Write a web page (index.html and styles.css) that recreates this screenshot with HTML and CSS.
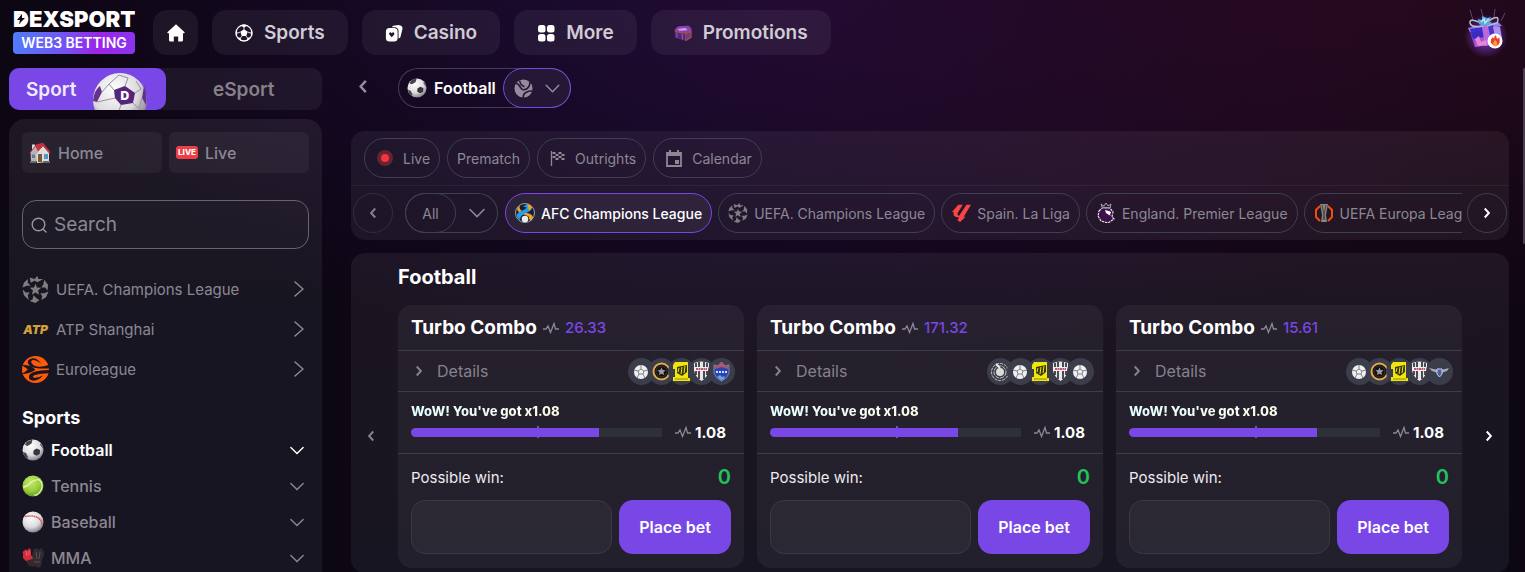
FILE: index.html
```
<!DOCTYPE html>
<html lang="en">

<head>
    <meta charset="UTF-8">
    <meta name="viewport" content="width=device-width, initial-scale=1.0">
    <title>Dexsport</title>
    <link rel="stylesheet" href="styles.css">
</head>

<body>
    <!-- icon sprite -->
    <svg class="sprite" width="0" height="0" aria-hidden="true">
        <defs>
            <radialGradient id="gBall" cx="40%" cy="30%" r="75%">
                <stop offset="0" stop-color="#fff" />
                <stop offset="0.6" stop-color="#dcdade" />
                <stop offset="1" stop-color="#77747c" />
            </radialGradient>
            <radialGradient id="gTennis" cx="40%" cy="30%" r="75%">
                <stop offset="0" stop-color="#c6ea6c" />
                <stop offset="0.6" stop-color="#98cc3c" />
                <stop offset="1" stop-color="#5d8e20" />
            </radialGradient>
            <linearGradient id="gGift" x1="0" y1="0" x2="1" y2="1">
                <stop offset="0" stop-color="#3b2fc4" />
                <stop offset="0.5" stop-color="#a04fd8" />
                <stop offset="1" stop-color="#f0b0ee" />
            </linearGradient>
            <radialGradient id="gGlow">
                <stop offset="0.3" stop-color="#8a3fe0" stop-opacity="0.7" />
                <stop offset="1" stop-color="#8a3fe0" stop-opacity="0" />
            </radialGradient>
        </defs>
        <symbol id="left" viewBox="0 0 10 16">
            <path d="M8 2 2.500 8 8 14" fill="none" stroke="currentColor" stroke-width="2.600" />
        </symbol>
        <symbol id="right" viewBox="0 0 10 16">
            <path d="M2 2 7.500 8 2 14" fill="none" stroke="currentColor" stroke-width="2.600" />
        </symbol>
        <symbol id="thin-right" viewBox="0 0 10 16">
            <path d="M1 1 9 8 1 15" fill="none" stroke="currentColor" stroke-width="1.500" stroke-linecap="round" />
        </symbol>
        <symbol id="down" viewBox="0 0 16 10">
            <path d="M1 1.500 8 8.500 15 1.500" fill="none" stroke="currentColor" stroke-width="1.600" stroke-linecap="round" />
        </symbol>
        <symbol id="house" viewBox="0 0 18 18">
            <path d="M9 .3 17.600 8.200Q18 9.300 17 9.300H16V16Q16 17.600 14.500 17.600H11.200V12.500H6.800V17.600H3.500Q2 17.600 2 16V9.300H1Q0 9.300 .4 8.200Z" fill="#fff" />
        </symbol>
        <symbol id="ball-line" viewBox="0 0 18 18">
            <circle cx="9" cy="9" r="8" fill="none" stroke="#fff" stroke-width="1.300" />
            <path d="M9 5.200 12.600 7.800 11.300 12H6.700L5.400 7.800ZM5.500 1.500 9 3.400 12.500 1.500 10.500.7H7.500ZM17 6 15.200 9 17.300 11.500ZM1 6 2.800 9 .7 11.500ZM11.600 17 12.400 13.800 15.800 13.300ZM6.400 17 5.600 13.800 2.200 13.300Z" fill="#fff" />
            <path d="M9 3V5.500M12.500 8 15.300 9M11 12 12.500 14M7 12 5.500 14M5.500 8 2.700 9" stroke="#fff" stroke-width=".8" />
        </symbol>
        <symbol id="cards" viewBox="0 0 20 19">
            <path d="M9 1.500 15 .6Q20 1.200 19.400 5L17.200 14Q16.600 15.600 15 15.400V7Q14.700 3.500 11.500 3H8Q8 1.800 9 1.500Z" fill="#fff" />
            <rect x="1" y="4" width="13" height="15" rx="4" fill="#fff" />
            <path d="M7.500 14.300 4.700 11.200Q4.200 8.600 6.300 8.800L7.500 9.800 8.700 8.800Q10.800 8.600 10.300 11.200Z" fill="#251532" />
        </symbol>
        <symbol id="dots" viewBox="0 0 18 18">
            <g fill="#fff">
                <rect x="1" y="1" width="7.500" height="7.500" rx="2.500" />
                <rect x="10" y="1" width="7.500" height="7.500" rx="2.500" />
                <rect x="1" y="10" width="7.500" height="7.500" rx="2.500" />
                <rect x="10" y="10" width="7.500" height="7.500" rx="2.500" />
            </g>
        </symbol>
        <symbol id="chest" viewBox="0 0 20 18">
            <path d="M1 5 6 1.500 16 1 19.500 4 19 14 13 17.500 1 14Z" fill="#6c3796" />
            <path d="M1 5Q3 1.500 6 1.500L16 1Q19 2 19.500 7L13 9 1 7Z" fill="#8444ac" />
            <path d="M4 4.500 13 3.500 15 6 6 6.500Z" fill="#d99af0" />
            <path d="M1 7.500 13 9.300 19.500 7.300M13 9.300V17.500M19 8V14L13 17.500" fill="none" stroke="#b0522c" stroke-width="1.200" />
            <path d="M1 8.500 12.500 10.500V16.800L1 13.500Z" fill="#4b2a7c" />
            <path d="M3 9 3.500 14M9 10 9.500 16" stroke="#a15ccc" />
        </symbol>
        <symbol id="gift" viewBox="0 0 50 50">
            <circle cx="25" cy="28" r="22" fill="url(#gGlow)" />
            <path d="M12 12 9 2M22 9 20 1M33 9 34 1M40 13 44 5" stroke="#a07bdc" stroke-opacity=".5" />
            <path d="M8 21 37 16 41 35 14 39Z" fill="url(#gGift)" />
            <path d="M7 20 37 14 41 18 9 24Z" fill="#9482e6" />
            <path d="M9 21 21 19 22 22 10 24Z" fill="#392bd2" />
            <path d="M10 24 21 22 23 29 12 31Z" fill="#3a2cc0" />
            <path d="M21 18 27 17 30 37 24 38Z" fill="#bb68df" />
            <path d="M27 18 32 17 34 26 29 27Z" fill="#4a35c8" />
            <path d="M32 19 39 19 41 30 35 33Z" fill="#aa92ee" />
            <path d="M14 31 18 28 20 34 25 32 26 37 17 38Z" fill="#e885d4" />
            <path d="M22 18Q10 20 9 15T18 14L23 17M25 18Q27 12 33 10T36 15L26 18" fill="none" stroke="#b9bcd0" stroke-width="1.500" />
            <path d="M18 16 17 11 21 12 21 8 26 10 30 9 28 13 31 15 26 18 22 18Z" fill="#5fa6dc" />
            <path d="M20 14 23 11 24 15 28 11" fill="none" stroke="#b9e8f5" stroke-width="1.500" />
            <circle cx="34" cy="33" r="7.500" fill="#fff" />
            <path d="M30 35Q29 31 32 29L33 31Q33 28 35 27 35 30 37 31L38 29Q40 34 37 37T30 35Z" fill="#ee3f27" />
            <path d="M32 36Q32 34 34 32 37 34 36 37T32 36Z" fill="#ff9c37" />
        </symbol>
        <symbol id="football" viewBox="0 0 22 22">
            <circle cx="11" cy="11" r="10.500" fill="url(#gBall)" />
            <path d="M11.500 11.500 14.500 9.500 18 11 17.800 15 14.500 16.800 11.300 15Z" fill="#37353c" />
            <path d="M4 3.500Q7 .6 10.500 1L9.500 4.500 5.500 7 3 6ZM1 13 4 14 6 18 5 19.500Q1.500 17 1 13ZM18 4 21 8 21 9 18.500 6.500Z" fill="#46434b" />
        </symbol>
        <symbol id="brand-ball" viewBox="0 0 56 56">
            <circle cx="28" cy="28" r="27" fill="url(#gBall)" />
            <path d="M22 18 33 14 43 21 41 31 29 33 23 26Z" fill="#55247c" />
            <path d="M1 29Q2 18 8 14L10 20 5 30ZM52 14Q56 23 54 33L50 26Z" fill="#65328d" />
            <path d="M22 18 17 12 10 20M17 12 27 3 36 6 33 14M43 21 49 17 44 9M41 31 47 37 50 26M29 33 26 41M23 26 5 30" fill="none" stroke="#96919c" />
        </symbol>
        <symbol id="tennis" viewBox="0 0 22 22">
            <circle cx="11" cy="11" r="10.500" fill="url(#gTennis)" />
            <path d="M1 12Q5 12 8 8.500T17 4.500Q22 9 19 15T12 20" fill="none" stroke="#e9f3bf" stroke-width="1.200" />
        </symbol>
        <symbol id="baseball" viewBox="0 0 22 22">
            <circle cx="11" cy="11" r="10.500" fill="url(#gBall)" />
            <path d="M3 5.500Q11 4 15.500 6.500T20 14" fill="none" stroke="#da4a4a" stroke-width="1.500" stroke-dasharray="1.500 .6" />
        </symbol>
        <symbol id="gloves" viewBox="0 0 22 22">
            <path d="M11 4Q12 1 14 2L15 1 17 3 19 1Q22 3 22 7L20 13 19 19 16 21 12 18 9 12Z" fill="#302d30" />
            <path d="M1 7Q0 4 2 4L4 2 5 4 7 1 9 3 9 8 11 11 9 14 4 14 1 11Z" fill="#d52c3c" />
            <path d="M4 14 10 12 14 16 12 20 7 19Z" fill="#38272c" />
            <path d="M14 5 15 12M18 5 17 12M12 15 18 15" stroke="#555158" />
            <path d="M4 4 5 9M7 4 7 8" stroke="#f36770" />
        </symbol>
        <symbol id="tennis-gray" viewBox="0 0 20 20">
            <circle cx="10" cy="10" r="9.500" fill="#968b9e" />
            <path d="M1 4Q5 5 7 9T14 10Q17 7 17 2M6 2Q7 7 11 8M10 20Q9 16 13 14T20 13" fill="none" stroke="#291936" stroke-width="1.700" />
        </symbol>
        <symbol id="home-emoji" viewBox="0 0 22 22">
            <path d="M3 2.500V9L6 7V2.500Z" fill="#d9d5dc" />
            <path d="M1.500 10 7 4 14 10V20L2 19Z" fill="#a9a7ac" />
            <path d="M7 11 14 4 20 11V20L8 21Z" fill="#dedde0" />
            <path d="M.5 11 7 2.500 14 .8 21.500 10 20.500 11.500 14 4 7 12Z" fill="#c8323a" />
            <path d="M1 11.500 6.500 4.500 9 9.500 7 12V20H2V11Z" fill="#b5b4ba" />
            <rect x="9" y="12" width="4" height="8" fill="#80562f" />
            <rect x="15" y="12" width="4" height="5" fill="#5894c8" />
            <path d="M3 12.500H6V16H3Z" fill="#647d92" />
            <path d="M1 19H7V21H1ZM14 19H21V21H14Z" fill="#676c63" />
        </symbol>
        <symbol id="search-icon" viewBox="0 0 16 16">
            <circle cx="7.500" cy="7.500" r="6.300" fill="none" stroke="#9a96a1" stroke-width="1.400" />
            <path d="m12 12 3 3" stroke="#9a96a1" stroke-width="1.400" stroke-linecap="round" />
        </symbol>
        <symbol id="starball" viewBox="0 0 28 28">
            <g fill="#7f7d80">
                <path d="m14 8 1.500 4 4.500.2-3.400 2.800 1.200 4.500-3.800-2.500-3.800 2.500 1.200-4.500L8 12.200l4.500-.2Z" />
                <path d="M8 1.500 13 3 16 0 17 3 22 3 18 5.500 16 6.500 13 5 9 7ZM23 4 27 9 26.500 15 24 12 20 12 22 9ZM27.500 16 25 22 20 25 21 21 19 18 23 18ZM18 25 14 28 8 26 11 24 12 20 15 23ZM7 25 2 20 .5 14 4 17 8 17 6 20ZM.5 12 2 7 6 3 6 7 9 10 5 10Z" />
            </g>
        </symbol>
        <symbol id="euroleague" viewBox="0 0 28 28">
            <circle cx="14" cy="14" r="14" fill="#ff5a0a" />
            <path d="M0 9.500Q8 9 14 14 8 19 0 18.500Q4 16 6 14 4 12 0 9.500ZM28 9Q18 13 12 9.500 8 6.500 10.500 4.500 13 3 20 8 15 1.500 10 2.500 4 4 7 9 10 13.500 28 13ZM28 14.500Q10 15 7.500 20 6 25 11 25.500 17 26 22 20 14 24 11.500 22 9.500 19 28 18Z" fill="#1a1620" />
        </symbol>
        <symbol id="flag" viewBox="0 0 14 16">
            <path d="M1 1V16" stroke="#8f8996" stroke-width="1.300" />
            <path d="M2 2H5V4H8V2H11V4H14V6H11V8H14V10H11V8H8V10H5V8H2V6H5V8H8V6H11V4H8V6H5V4H2Z" fill="#8f8996" />
        </symbol>
        <symbol id="calendar" viewBox="0 0 16 17">
            <path d="M1 3H15V16H1Z" fill="none" stroke="currentColor" stroke-width="1.800" />
            <path d="M1 2.500H15V6H1ZM3 0H5V3H3ZM11 0H13V3H11ZM9 10H13V14H9Z" fill="currentColor" />
        </symbol>
        <symbol id="afc" viewBox="0 0 20 20">
            <circle cx="10" cy="10" r="9.500" fill="#14202c" stroke="#9ba4ab" />
            <path d="M9 1Q3 2 5 6 7 9 12 10 18 11 18 15L16 18 14 16Q15 13 10 12 3 10 2 6 4 2 9 1Z" fill="#efa127" />
            <path d="M12 1Q18 3 16 7 14 9 9 11 5 13 5 17L2 14Q1 10 6 8 12 6 11 4L8 4Z" fill="#269be7" />
            <path d="M12 1Q17 2 17 5L14 8 13 4Z" fill="#efa127" />
            <circle cx="10" cy="16" r="3.300" fill="#e9edef" />
        </symbol>
        <symbol id="laliga" viewBox="0 0 22 20">
            <path d="M8 1H13L8 9Q6 13 9 13L17 1H22L14 14 16 14 10 20 7 18 9 15Q1 15 3 9H1Z" fill="#f94642" />
        </symbol>
        <symbol id="premier" viewBox="0 0 18 20">
            <path d="M2 8 5 5 13 5 16 9 15 14 17 16 11 20 4 18 1 13Z" fill="#3d1049" stroke="#e6dee9" stroke-width="1.200" stroke-dasharray="2.500 .8" />
            <path d="M5 4 4 1 7 3 9 0 11 3 14 1 13 5Z" fill="none" stroke="#a99fb0" />
            <path d="m8 7 4 1 2 1-1 3 2 1-3-1-3-2Z" fill="#fff" />
        </symbol>
        <symbol id="europa" viewBox="0 0 20 20">
            <path d="M6 3 2 7V14L6 18M14 3 18 7V14L14 18" fill="none" stroke="#ed500b" stroke-width="2" />
            <path d="M6 1H14L12 12 13 19H7L8 12Z" fill="#898681" />
            <path d="M8 2 11 17M12 2 9 17" stroke="#4d454c" />
        </symbol>
        <symbol id="pulse" viewBox="0 0 16 12">
            <path d="M0 7H3L5 4 7.500 10.500 11 1.500 12.500 7H16" fill="none" stroke="#8b8794" stroke-width="1.300" />
        </symbol>

        <!-- team badges -->
        <symbol id="t-ball" viewBox="0 0 27 27">
            <circle cx="13" cy="14" r="7" fill="#f0f0f2" />
            <path d="M13 11 16 13 15 16H11L10 13ZM13 11V7M16 13 20 12M15 16 17 20M11 16 9 20M10 13 6 12" fill="none" stroke="#7d8088" />
        </symbol>
        <symbol id="t-ring" viewBox="0 0 27 27">
            <circle cx="13.500" cy="13.500" r="8" fill="#121214" stroke="#e5a94c" stroke-width="2" />
            <circle cx="13.500" cy="13.500" r="5.500" fill="none" stroke="#3c3632" stroke-width="1" />
            <path d="m13.500 9.500 1.200 2.500 2.800.3-2 2 .5 2.700-2.500-1.200-2.500 1.200.5-2.700-2-2 2.800-.3Z" fill="#9b9ba0" />
        </symbol>
        <symbol id="t-ittihad" viewBox="0 0 27 27">
            <path d="M7 4H20V20H22V23H5V19H7V11H5V7Z" fill="#f1e60c" />
            <path d="M9 9 19 7V14L14 18 9 15Z" fill="#38370f" />
            <path d="m10 14 1-4m2 6 1-7m2 6 1-7" stroke="#f1e60c" />
            <path d="M7 21H20" stroke="#8d870c" />
        </symbol>
        <symbol id="t-vissel" viewBox="0 0 27 27">
            <path d="M6 5Q13 2 21 5V12Q20 19 13.500 23 7 19 6 12Z" fill="#e8e8ea" />
            <path d="M8 5V17M11 4V21M16 4V21M19 5V17" stroke="#17171b" stroke-width="1.500" />
            <path d="M6 9H21V13H6Z" fill="#f1edf0" />
            <path d="M8 11H19" stroke="#b32248" stroke-width="1.500" stroke-dasharray="2 .5" />
        </symbol>
        <symbol id="t-blue" viewBox="0 0 27 27">
            <path d="M6 7 10 8 13.500 4 17 8 21 7V15Q20 20 13.500 23 7 20 6 15Z" fill="#2944b4" stroke="#9aa5d4" stroke-width=".7" />
            <path d="M6 6 9 9 13.500 4 18 9 21 6 20 11 13.500 9 7 11Z" fill="#b65561" />
            <path d="M8 14H19" stroke="#d7ddf5" stroke-width="2" stroke-dasharray="2 1" />
            <path d="M9 19 12 17 14 19 17 18 16 21 13.500 22.500Z" fill="#68a1e4" />
        </symbol>
        <symbol id="t-maze" viewBox="0 0 27 27">
            <g fill="none" stroke="#c9c7c5">
                <circle cx="13" cy="14" r="8.500" stroke-dasharray="3 1" />
                <circle cx="13" cy="14" r="6" stroke-dasharray="4 1" />
            </g>
            <circle cx="13" cy="14" r="4" fill="#dddbd8" />
            <path d="M9 6 13 10" stroke="#eeeeee" stroke-width="2" />
        </symbol>
        <symbol id="t-wings" viewBox="0 0 27 27">
            <path d="M3 10 12 12H15L23 10 21 13 15 15H12L6 13Z" fill="#a5abb6" />
            <path d="M11 11H16V16L13.500 19 11 16Z" fill="#4a5fa9" stroke="#d0d4df" />
        </symbol>
    </svg>

    <header class="header">
        <a href="#" class="logo">
            <span class="logo-name">DEXSPORT
                <svg class="bolt" viewBox="0 0 9 10"><path d="M1 1H7V9H1Z" fill="#fff" /><path d="M5 0 0 6H3L2 10 8 4H5Z" fill="#110919" /></svg>
            </span>
            <span class="logo-tag">WEB3 BETTING</span>
        </a>
        <nav class="nav">
            <a href="#" class="nav-item nav-home" aria-label="Home"><svg width="18" height="18"><use href="#house" /></svg></a>
            <a href="#" class="nav-item"><svg width="18" height="18"><use href="#ball-line" /></svg>Sports</a>
            <a href="#" class="nav-item"><svg width="18" height="18"><use href="#cards" /></svg>Casino</a>
            <a href="#" class="nav-item"><svg width="18" height="18"><use href="#dots" /></svg>More</a>
            <a href="#" class="nav-item"><svg width="18" height="18"><use href="#chest" /></svg>Promotions</a>
        </nav>
        <a href="#" class="gift" aria-label="Gifts"><svg width="50" height="50"><use href="#gift" /></svg></a>
    </header>

    <div class="layout">
        <aside class="sidebar">
            <div class="tabs">
                <button class="tab active">Sport
                    <span class="tab-ball"><svg width="56" height="56"><use href="#brand-ball" /></svg><b>D</b></span>
                </button>
                <button class="tab">eSport</button>
            </div>
            <div class="side-panel">
                <div class="quick">
                    <a href="#" class="quick-item"><svg width="22" height="22"><use href="#home-emoji" /></svg>Home</a>
                    <a href="#" class="quick-item"><span class="live-tag">LIVE</span>Live</a>
                </div>
                <label class="search">
                    <svg width="16" height="16"><use href="#search-icon" /></svg>
                    <input type="text" placeholder="Search" aria-label="Search">
                </label>
                <div class="leagues">
                    <a href="#" class="league"><svg width="27" height="27"><use href="#starball" /></svg><span>UEFA. Champions League</span><svg width="10" height="16"><use href="#thin-right" /></svg></a>
                    <a href="#" class="league"><i class="atp">ATP</i><span>ATP Shanghai</span><svg width="10" height="16"><use href="#thin-right" /></svg></a>
                    <a href="#" class="league"><svg width="27" height="27"><use href="#euroleague" /></svg><span>Euroleague</span><svg width="10" height="16"><use href="#thin-right" /></svg></a>
                </div>
                <h2 class="side-title">Sports</h2>
                <div class="sports">
                    <button class="sport active"><svg width="22" height="22"><use href="#football" /></svg><span>Football</span><svg width="14" height="9"><use href="#down" /></svg></button>
                    <button class="sport"><svg width="22" height="22"><use href="#tennis" /></svg><span>Tennis</span><svg width="14" height="9"><use href="#down" /></svg></button>
                    <button class="sport"><svg width="22" height="22"><use href="#baseball" /></svg><span>Baseball</span><svg width="14" height="9"><use href="#down" /></svg></button>
                    <button class="sport"><svg width="22" height="22"><use href="#gloves" /></svg><span>MMA</span><svg width="14" height="9"><use href="#down" /></svg></button>
                </div>
            </div>
        </aside>

        <main class="main">
            <div class="sport-bar">
                <button class="back" aria-label="Back"><svg width="10" height="15"><use href="#left" /></svg></button>
                <div class="picker">
                    <a href="#" class="picker-name"><svg width="20" height="20"><use href="#football" /></svg>Football</a>
                    <button class="picker-more" aria-label="More sports"><svg width="19" height="19"><use href="#tennis-gray" /></svg><svg width="15" height="9"><use href="#down" /></svg></button>
                </div>
            </div>

            <section class="panel filters">
                <div class="filter-row">
                    <button class="chip"><span class="rec"></span>Live</button>
                    <button class="chip chip-text">Prematch</button>
                    <button class="chip"><svg width="15" height="16"><use href="#flag" /></svg>Outrights</button>
                    <button class="chip"><svg width="16" height="17"><use href="#calendar" /></svg>Calendar</button>
                </div>
                <div class="league-row">
                    <button class="round dim" aria-label="Previous"><svg width="8" height="12"><use href="#left" /></svg></button>
                    <div class="all">
                        <button class="all-name">All</button>
                        <button class="all-more" aria-label="All leagues"><svg width="16" height="10"><use href="#down" /></svg></button>
                    </div>
                    <div class="league-list">
                        <button class="chip league-chip active"><svg width="20" height="20"><use href="#afc" /></svg>AFC Champions League</button>
                        <button class="chip league-chip"><svg width="20" height="20"><use href="#starball" /></svg>UEFA. Champions League</button>
                        <button class="chip league-chip"><svg width="20" height="20"><use href="#laliga" /></svg>Spain. La Liga</button>
                        <button class="chip league-chip"><svg width="20" height="20"><use href="#premier" /></svg>England. Premier League</button>
                        <button class="chip league-chip"><svg width="20" height="20"><use href="#europa" /></svg>UEFA Europa League</button>
                    </div>
                    <button class="round" aria-label="Next"><svg width="8" height="12"><use href="#right" /></svg></button>
                </div>
            </section>

            <section class="panel combos">
                <h1 class="combos-title">Football</h1>
                <div class="carousel">
                    <button class="slide dim" aria-label="Previous combos"><svg width="8" height="12"><use href="#left" /></svg></button>
                    <div class="cards">
                        <article class="card">
                            <div class="card-head"><h3>Turbo Combo</h3><svg width="16" height="12"><use href="#pulse" /></svg><span class="odds">26.33</span></div>
                            <button class="details"><svg width="8" height="12"><use href="#right" /></svg>Details
                                <span class="teams">
                                    <svg><use href="#t-ball" /></svg>
                                    <svg><use href="#t-ring" /></svg>
                                    <svg><use href="#t-ittihad" /></svg>
                                    <svg><use href="#t-vissel" /></svg>
                                    <svg><use href="#t-blue" /></svg>
                                </span>
                            </button>
                            <div class="boost">
                                <div class="wow">WoW! You've got x1.08</div>
                                <div class="boost-row"><div class="bar"><div class="bar-fill" style="width: 75%"></div></div><svg width="16" height="12"><use href="#pulse" /></svg><b>1.08</b></div>
                            </div>
                            <div class="bet">
                                <div class="win">Possible win: <b>0</b></div>
                                <div class="stake"><input type="text" aria-label="Stake"><button class="place">Place bet</button></div>
                            </div>
                        </article>
                        <article class="card">
                            <div class="card-head"><h3>Turbo Combo</h3><svg width="16" height="12"><use href="#pulse" /></svg><span class="odds">171.32</span></div>
                            <button class="details"><svg width="8" height="12"><use href="#right" /></svg>Details
                                <span class="teams">
                                    <svg><use href="#t-maze" /></svg>
                                    <svg><use href="#t-ball" /></svg>
                                    <svg><use href="#t-ittihad" /></svg>
                                    <svg><use href="#t-vissel" /></svg>
                                    <svg><use href="#t-ball" /></svg>
                                </span>
                            </button>
                            <div class="boost">
                                <div class="wow">WoW! You've got x1.08</div>
                                <div class="boost-row"><div class="bar"><div class="bar-fill" style="width: 75%"></div></div><svg width="16" height="12"><use href="#pulse" /></svg><b>1.08</b></div>
                            </div>
                            <div class="bet">
                                <div class="win">Possible win: <b>0</b></div>
                                <div class="stake"><input type="text" aria-label="Stake"><button class="place">Place bet</button></div>
                            </div>
                        </article>
                        <article class="card">
                            <div class="card-head"><h3>Turbo Combo</h3><svg width="16" height="12"><use href="#pulse" /></svg><span class="odds">15.61</span></div>
                            <button class="details"><svg width="8" height="12"><use href="#right" /></svg>Details
                                <span class="teams">
                                    <svg><use href="#t-ball" /></svg>
                                    <svg><use href="#t-ring" /></svg>
                                    <svg><use href="#t-ittihad" /></svg>
                                    <svg><use href="#t-vissel" /></svg>
                                    <svg><use href="#t-wings" /></svg>
                                </span>
                            </button>
                            <div class="boost">
                                <div class="wow">WoW! You've got x1.08</div>
                                <div class="boost-row"><div class="bar"><div class="bar-fill" style="width: 75%"></div></div><svg width="16" height="12"><use href="#pulse" /></svg><b>1.08</b></div>
                            </div>
                            <div class="bet">
                                <div class="win">Possible win: <b>0</b></div>
                                <div class="stake"><input type="text" aria-label="Stake"><button class="place">Place bet</button></div>
                            </div>
                        </article>
                    </div>
                    <button class="slide" aria-label="Next combos"><svg width="8" height="12"><use href="#right" /></svg></button>
                </div>
            </section>
        </main>
    </div>
    <div class="scroll-thumb"></div>
</body>

</html>
```
FILE: styles.css
```
* {
    box-sizing: border-box;
}

body {
    margin: 0;
    height: 100vh;
    overflow: hidden;
    display: flex;
    flex-direction: column;
    font-family: Inter, "Liberation Sans", sans-serif;
    color: #fff;
    background:
        radial-gradient(ellipse 55% 60% at 90% 0, rgba(52, 10, 32, 0.6), transparent),
        radial-gradient(ellipse 50% 65% at 52% 0, rgba(34, 12, 62, 0.85), transparent),
        #0d0613;
}

a {
    color: inherit;
    text-decoration: none;
}

button {
    font-family: inherit;
    color: inherit;
    background: none;
    border: none;
    padding: 0;
    cursor: pointer;
}

svg {
    flex-shrink: 0;
}

h1,
h2,
h3 {
    margin: 0;
    font-weight: 700;
}

.sprite {
    position: absolute;
}

/* header */
.header {
    display: flex;
    align-items: center;
    padding: 10px 14px 13px 13px;
    height: 68px;
    flex-shrink: 0;
}

.logo {
    width: 122px;
    margin-right: 18px;
    text-align: center;
}

.logo-name {
    display: block;
    position: relative;
    font-size: 22px;
    line-height: 16px;
    font-weight: 900;
}

.bolt {
    position: absolute;
    left: 4px;
    top: 3px;
    width: 9px;
    height: 10px;
}

.logo-tag {
    display: block;
    margin-top: 5px;
    border-radius: 4px;
    background: linear-gradient(100deg, #4f7df8, #7056f5 40%, #9b25e8 70%, #8a35ee);
    font-size: 14px;
    line-height: 22px;
    font-weight: 600;
}

.nav {
    display: flex;
    gap: 14px;
    flex: 1;
}

.nav-item {
    display: flex;
    align-items: center;
    gap: 11px;
    height: 45px;
    padding: 0 23px;
    border-radius: 14px;
    background: rgba(255, 255, 255, 0.06);
    color: #d0cbd5;
    font-size: 19px;
    font-weight: 600;
}

.nav-home {
    width: 45px;
    padding: 0;
    justify-content: center;
}

.gift {
    height: 50px;
}

/* columns */
.layout {
    display: flex;
    flex: 1;
    gap: 29px;
    min-height: 0;
    padding: 0 16px 0 9px;
}

.sidebar {
    width: 313px;
    flex-shrink: 0;
    display: flex;
    flex-direction: column;
}

.tabs {
    display: grid;
    grid-template-columns: 1fr 1fr;
    height: 42px;
    flex-shrink: 0;
    border-radius: 10px;
    background: rgba(255, 255, 255, 0.06);
}

.tab {
    height: 42px;
    border-radius: 10px;
    color: #858089;
    font-size: 19px;
    font-weight: 600;
}

.tab.active {
    display: flex;
    align-items: center;
    gap: 16px;
    padding-left: 17px;
    overflow: hidden;
    background: #7847e5;
    color: #f0eaff;
}

.tab-ball {
    position: relative;
    height: 34px;
    color: #fff;
    font-size: 12px;
}

.tab-ball b {
    position: absolute;
    left: 28px;
    top: 16px;
}

.side-panel {
    flex: 1;
    min-height: 0;
    margin-top: 9px;
    padding: 13px 13px 0;
    border-radius: 16px 16px 0 0;
    background: linear-gradient(rgba(255, 255, 255, 0.07), rgba(34, 36, 48, 0.5) 45%);
    color: #8b8894;
}

.quick {
    display: flex;
    gap: 7px;
}

.quick-item {
    flex: 1;
    display: flex;
    align-items: center;
    gap: 7px;
    height: 41px;
    padding-left: 7px;
    border-radius: 6px;
    background: rgba(255, 255, 255, 0.05);
    font-size: 16px;
    font-weight: 500;
}

.live-tag {
    width: 22px;
    border-radius: 3px;
    background: #ef3f46;
    color: #fff;
    font-size: 8px;
    line-height: 13px;
    font-weight: 800;
    text-align: center;
}

.search {
    display: flex;
    align-items: center;
    gap: 7px;
    height: 49px;
    margin: 27px 0 20px;
    padding: 0 8px;
    border: 1px solid #68636d;
    border-radius: 14px;
    background: rgba(255, 255, 255, 0.02);
}

.search input {
    flex: 1;
    min-width: 0;
    padding: 0;
    border: none;
    outline: none;
    background: none;
    color: #fff;
    font-family: inherit;
    font-size: 19px;
}

.search input::placeholder {
    color: #8b8894;
}

.league {
    display: flex;
    align-items: center;
    gap: 7px;
    height: 40px;
    padding-right: 5px;
    font-size: 15px;
}

.league span,
.sport span {
    flex: 1;
}

.atp {
    width: 27px;
    color: #d2a13a;
    font-size: 12px;
    font-weight: 900;
    text-align: center;
}

.side-title {
    margin-top: 18px;
    color: #fff;
    font-size: 18px;
    line-height: 22px;
}

.sports {
    margin-top: 3px;
}

.sport {
    display: flex;
    align-items: center;
    gap: 7px;
    width: 100%;
    height: 36px;
    padding-right: 5px;
    font-size: 16px;
    font-weight: 500;
    text-align: left;
}

.sport.active {
    color: #fff;
    font-weight: 600;
}

/* main column */
.main {
    flex: 1;
    min-width: 0;
}

.sport-bar {
    display: flex;
    align-items: center;
    height: 40px;
    margin-bottom: 23px;
}

.back {
    width: 24px;
    margin-right: 23px;
    height: 40px;
    color: #938e9b;
}

.picker {
    display: flex;
    height: 40px;
    border-radius: 20px;
    box-shadow: inset 0 0 0 1px #3c4050;
    font-size: 16px;
    font-weight: 600;
}

.picker-name {
    display: flex;
    align-items: center;
    gap: 7px;
    padding: 0 7px 0 9px;
}

.picker-more {
    display: flex;
    align-items: center;
    justify-content: space-between;
    width: 68px;
    padding: 0 10px;
    border: 1px solid #7847e5;
    border-radius: 20px;
    background: rgba(255, 255, 255, 0.06);
    color: #938e9b;
}

.panel {
    border-radius: 14px;
    background: rgba(255, 255, 255, 0.06);
}

.filter-row {
    display: flex;
    gap: 7px;
    padding: 7px 13px;
    border-bottom: 1px solid rgba(255, 255, 255, 0.06);
}

.chip {
    display: flex;
    align-items: center;
    gap: 10px;
    height: 40px;
    padding: 0 9px 0 12px;
    border: 1px solid #3c4050;
    border-radius: 20px;
    color: #8b8894;
    font-size: 14px;
    white-space: nowrap;
}

.chip-text {
    padding: 0 9px;
}

.rec {
    width: 16px;
    height: 16px;
    border: 4px solid #642432;
    border-radius: 50%;
    background: #f8333b;
}

.league-row {
    display: flex;
    align-items: center;
    padding: 7px 2px;
}

.round {
    display: flex;
    align-items: center;
    justify-content: center;
    flex-shrink: 0;
    width: 40px;
    height: 40px;
    border: 1px solid #3c4050;
    border-radius: 50%;
}

.dim {
    color: #86828d;
}

.round.dim {
    border-color: #342d41;
}

.all {
    display: flex;
    flex-shrink: 0;
    width: 93px;
    height: 40px;
    margin: 0 7px 0 12px;
    border-radius: 20px;
    box-shadow: inset 0 0 0 1px #3c4050;
    color: #8b8894;
}

.all-name {
    width: 51px;
    border: 1px solid #3c4050;
    border-radius: 20px;
    font-size: 14px;
}

.all-more {
    flex: 1;
}

.league-list {
    display: flex;
    flex: 1;
    gap: 6px;
    min-width: 0;
    margin-right: 5px;
    overflow: hidden;
}

.league-chip {
    gap: 6px;
    flex-shrink: 0;
    padding: 0 9px;
}

.league-chip.active {
    border-color: #7847e5;
    background: rgba(255, 255, 255, 0.06);
    color: #fff;
    font-weight: 500;
}

/* combos */
.combos {
    margin-top: 13px;
    padding: 12px 0 5px;
    background: linear-gradient(rgba(255, 255, 255, 0.06), rgba(34, 36, 48, 0.5));
}

.combos-title {
    padding-left: 47px;
    font-size: 20px;
    line-height: 24px;
}

.carousel {
    display: flex;
    margin-top: 16px;
}

.slide {
    width: 47px;
    flex-shrink: 0;
    padding-right: 8px;
}

.slide:last-child {
    padding: 0 0 0 6px;
}

.cards {
    flex: 1;
    min-width: 0;
    display: grid;
    grid-template-columns: repeat(3, minmax(0, 1fr));
    gap: 13px;
}

.card {
    border-radius: 14px;
    background: rgba(255, 255, 255, 0.05);
}

.card-head,
.details,
.boost {
    border-bottom: 1px solid #3b3e4a;
}

.card-head {
    display: flex;
    align-items: center;
    gap: 6px;
    height: 46px;
    padding: 0 13px;
}

.card-head h3 {
    font-size: 19px;
}

.odds {
    color: #7847e5;
    font-size: 15px;
    font-weight: 500;
}

.details {
    display: flex;
    align-items: center;
    gap: 14px;
    width: 100%;
    height: 41px;
    padding: 0 9px 0 17px;
    color: #86828d;
    font-size: 16px;
}

.teams {
    display: flex;
    margin-left: auto;
}

.teams svg {
    width: 27px;
    height: 27px;
    margin-left: -7px;
    border-radius: 50%;
    background: #3b3e4a;
}

.boost {
    height: 62px;
    padding: 10px 13px 0;
}

.wow {
    width: max-content;
    background: linear-gradient(90deg, #e4ffff, #fffbe8);
    background-clip: text;
    -webkit-background-clip: text;
    color: transparent;
    font-size: 13px;
    line-height: 18px;
    font-weight: 800;
}

.boost-row {
    display: flex;
    align-items: center;
    gap: 4px;
    height: 24px;
    padding-right: 5px;
    font-size: 15px;
}

.bar {
    position: relative;
    flex: 1;
    height: 9px;
    margin-right: 9px;
    border-radius: 5px 0 0 5px;
    background: #2d3037;
}

.bar-fill {
    height: 100%;
    border-radius: 5px 0 0 5px;
    background: #7847e5;
}

.bar::after {
    content: "";
    position: absolute;
    left: 50%;
    top: -2px;
    width: 2px;
    height: 12px;
    background: #7847e5;
}

.bet {
    padding: 10px 13px 14px;
}

.win {
    display: flex;
    justify-content: space-between;
    align-items: center;
    height: 26px;
    color: #edebef;
    font-size: 15px;
}

.win b {
    color: #20c35f;
    font-size: 20px;
    font-weight: 600;
}

.stake {
    display: flex;
    gap: 7px;
    height: 54px;
    margin-top: 10px;
}

.stake input {
    flex: 1;
    min-width: 0;
    padding: 0 13px;
    border: 1px solid #3b3842;
    border-radius: 14px;
    background: rgba(255, 255, 255, 0.04);
    color: #fff;
    font-family: inherit;
    font-size: 16px;
}

.place {
    width: 112px;
    border-radius: 14px;
    background: #7847e5;
    font-size: 16px;
    font-weight: 600;
}

.scroll-thumb {
    position: absolute;
    right: 0;
    top: 68px;
    width: 2px;
    height: 176px;
    border-radius: 2px;
    background: #4d3d50;
}
```
